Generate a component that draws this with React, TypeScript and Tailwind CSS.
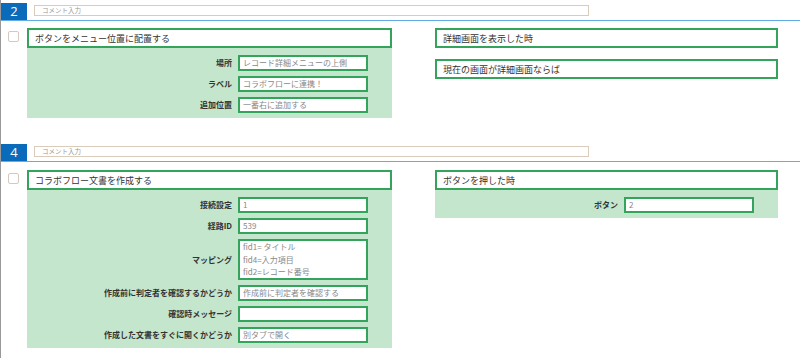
import React from "react";

type Field = {
  label: string;
  value?: string;
  lines?: string[];
};

const GREEN = "border-[#34a35b]";

function TitleBox({ text }: { text: string }) {
  return (
    <div
      className={`h-[20px] border-2 ${GREEN} bg-white px-[6px] flex items-center text-[9px] text-[#333] leading-none`}
    >
      {text}
    </div>
  );
}

function FieldRow({ field }: { field: Field }) {
  return (
    <div className="flex justify-end items-center gap-[6px]">
      <div className="text-[8px] font-bold text-[#333] leading-none whitespace-nowrap">
        {field.label}
      </div>
      {field.lines ? (
        <div
          className={`w-[130px] h-[41px] border-2 ${GREEN} bg-white px-[3px] flex flex-col text-[8px] text-[#888] leading-[12.5px] overflow-hidden`}
        >
          {field.lines.map((l) => (
            <div key={l} className="whitespace-nowrap">{l}</div>
          ))}
        </div>
      ) : (
        <div
          className={`w-[130px] h-[16px] border-2 ${GREEN} bg-white px-[3px] flex items-center text-[8px] text-[#888] leading-none whitespace-nowrap`}
        >
          {field.value}
        </div>
      )}
    </div>
  );
}

function Panel({ fields }: { fields: Field[] }) {
  return (
    <div className="bg-[#c4e6cd] pt-[7px] pb-[5px] pr-[24px] flex flex-col gap-[5px]">
      {fields.map((f) => (
        <FieldRow key={f.label} field={f} />
      ))}
    </div>
  );
}

function Header({ num }: { num: string }) {
  return (
    <div className="flex items-start h-[18px] border-b border-[#62ace6]">
      <div className="w-[26px] h-[17px] bg-[#0b6bbb] text-white text-[13px] flex items-center justify-center leading-none font-['Open_Sans',sans-serif]">
        {num}
      </div>
      <div className="ml-[7px] mt-[2px] w-[555px] h-[11px] border border-[#dacbbb] bg-white pl-[7px] flex items-center text-[6.5px] text-[#999] leading-none">
        コメント入力
      </div>
    </div>
  );
}

function Checkbox() {
  return (
    <div className="ml-[7px] mt-[3px] w-[11px] h-[11px] border border-[#d3c9bf] rounded-[2px] bg-white shrink-0" />
  );
}

export default function App() {
  return (
    <div className="w-[800px] h-[358px] bg-white border-l border-[#999] overflow-hidden pt-[3px] font-['Noto_Sans_CJK_JP',sans-serif]">
      {/* row 2 */}
      <div className="mb-[26px]">
        <Header num="2" />
        <div className="flex pt-[7px]">
          <Checkbox />
          <div className="ml-[8px] w-[365px]">
            <TitleBox text="ボタンをメニュー位置に配置する" />
            <Panel
              fields={[
                { label: "場所", value: "レコード詳細メニューの上側" },
                { label: "ラベル", value: "コラボフローに連携！" },
                { label: "追加位置", value: "一番右に追加する" },
              ]}
            />
          </div>
          <div className="ml-[43px] w-[343px] flex flex-col gap-[11px]">
            <TitleBox text="詳細画面を表示した時" />
            <TitleBox text="現在の画面が詳細画面ならば" />
          </div>
        </div>
      </div>

      {/* row 4 */}
      <div>
        <Header num="4" />
        <div className="flex pt-[8px]">
          <Checkbox />
          <div className="ml-[8px] w-[365px]">
            <TitleBox text="コラボフロー文書を作成する" />
            <Panel
              fields={[
                { label: "接続設定", value: "1" },
                { label: "経路ID", value: "539" },
                {
                  label: "マッピング",
                  lines: ["fid1= タイトル", "fid4=入力項目", "fid2=レコード番号"],
                },
                { label: "作成前に判定者を確認するかどうか", value: "作成前に判定者を確認する" },
                { label: "確認時メッセージ", value: "" },
                { label: "作成した文書をすぐに開くかどうか", value: "別タブで開く" },
              ]}
            />
          </div>
          <div className="ml-[43px] w-[343px]">
            <TitleBox text="ボタンを押した時" />
            <Panel fields={[{ label: "ボタン", value: "2" }]} />
          </div>
        </div>
      </div>
    </div>
  );
}
